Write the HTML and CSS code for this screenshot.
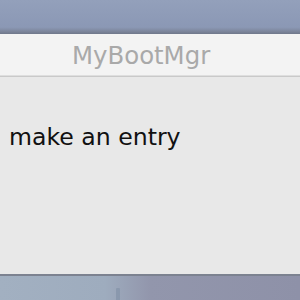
FILE: index.html
```html
<!DOCTYPE html>
<html>
<head>
<meta charset="utf-8">
<link rel="stylesheet" href="styles.css">
</head>
<body>
<div class="desk-top"></div>
<div class="window">
  <div class="titlebar">MyBootMgr</div>
  <div class="content">
    <p class="message">make an entry</p>
  </div>
</div>
<div class="desk-bottom">
  <div class="spire"></div>
</div>
</body>
</html>
```
FILE: styles.css
```css
html, body {
  margin: 0;
  padding: 0;
}
body {
  width: 300px;
  height: 300px;
  overflow: hidden;
  background: #8f9dba;
  font-family: "DejaVu Sans", sans-serif;
}
.desk-top {
  height: 34px;
  background: linear-gradient(to bottom, #93a0bb 0%, #8b98b5 80%, #7d869c 92%, #6f778a 100%);
}
.window {
  position: relative;
  z-index: 1;
}
.titlebar {
  height: 40px;
  padding-top: 2px;
  line-height: 40px;
  padding-left: 72px;
  background: #f3f3f3;
  color: #a9a9a9;
  font-size: 24.4px;
  border-bottom: 1px solid #c9c9c9;
  box-shadow: inset 0 -1px 0 #dedede;
}
.content {
  background: #e8e8e8;
  padding-top: 47px;
  box-sizing: border-box;
  height: 197px;
}
.message {
  margin: 0 0 0 9px;
  font-size: 23.6px;
  line-height: 27px;
  color: #111111;
  white-space: nowrap;
}
.desk-bottom {
  height: 26px;
  position: relative;
  background: linear-gradient(to right, #a2b0c1 0%, #9eacbe 35%, #9296ac 50%, #8e91a8 100%);
  box-shadow: inset 0 2px 0 #7c8290;
}
.spire {
  position: absolute;
  left: 116px;
  top: 14px;
  width: 4px;
  height: 12px;
  background: #8a98ad;
  border-radius: 1px 1px 0 0;
}
```
